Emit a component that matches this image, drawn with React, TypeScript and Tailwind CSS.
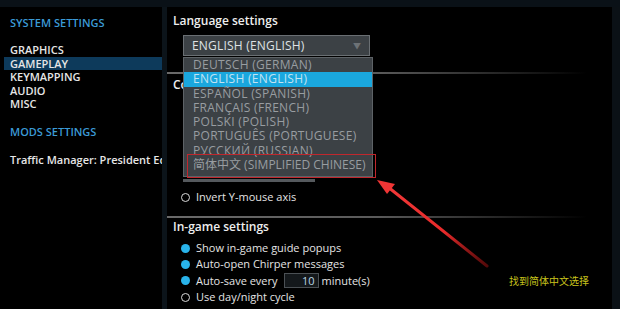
const font = { fontFamily: '"Open Sans", "Noto Sans CJK SC", sans-serif' };

const languages = [
  'DEUTSCH (GERMAN)',
  'ENGLISH (ENGLISH)',
  'ESPAÑOL (SPANISH)',
  'FRANÇAIS (FRENCH)',
  'POLSKI (POLISH)',
  'PORTUGUÊS (PORTUGUESE)',
  'РУССКИЙ (RUSSIAN)',
  '简体中文 (SIMPLIFIED CHINESE)',
];

const Radio = ({ on }: { on: boolean }) =>
  on ? (
    <span className="w-[9px] h-[9px] rounded-full bg-[#29b3ea] shrink-0" />
  ) : (
    <span className="w-[9px] h-[9px] rounded-full border-[1.5px] border-[#d8d8d8] shrink-0" />
  );

const Separator = () => (
  <div className="h-[2px] w-[420px] -ml-[6px] bg-gradient-to-r from-[#6a6a6a] via-[#5a5a5a] to-transparent" />
);

export default function App() {
  return (
    <div
      className="relative w-[620px] h-[309px] bg-black overflow-hidden flex flex-col text-white"
      style={font}
    >
      <div className="h-[7px] bg-[#0a1117] shrink-0" />
      <div className="flex flex-1">
        {/* sidebar */}
        <div className="w-[162px] pt-[9px] flex flex-col text-[11px] font-semibold">
          <div className="pl-[10px] text-[#3b9ad6] leading-[14px]">SYSTEM SETTINGS</div>
          <div className="mt-[13px] flex flex-col leading-[13.6px] text-[#e6e6e6]">
            <div className="pl-[10px]">GRAPHICS</div>
            <div className="ml-[4px] pl-[6px] bg-[#0d3a5b]">GAMEPLAY</div>
            <div className="pl-[10px]">KEYMAPPING</div>
            <div className="pl-[10px]">AUDIO</div>
            <div className="pl-[10px]">MISC</div>
          </div>
          <div className="mt-[14px] pl-[10px] text-[#3b9ad6] leading-[14px]">MODS SETTINGS</div>
          <div className="mt-[14px] pl-[10px] text-[#e6e6e6] whitespace-nowrap overflow-hidden leading-[14px]">
            Traffic Manager: President Edition
          </div>
        </div>
        <div className="w-[5px] bg-[#0c141a]" />

        {/* content */}
        <div className="flex-1 flex flex-col pl-[6px] pt-[7px] text-[11px]">
          <div className="font-semibold text-[12px] text-[#eeeeee] leading-[14px]">Language settings</div>
          <div className="mt-[7px] ml-[10px] w-[187px] h-[21px] bg-[#3c4145] border border-[#6a6f73] flex items-center justify-between px-[8px]">
            <span className="text-[12px] tracking-[0.2px] text-[#dfe2e4]">ENGLISH (ENGLISH)</span>
            <span className="text-[8px] text-[#6d7276]">▼</span>
          </div>
          <div className="mt-[16px]">
            <Separator />
          </div>
          <div className="mt-[4px] font-semibold text-[12px] text-[#eeeeee] leading-[14px]">Controls</div>
          <div className="mt-[87px] ml-[10px] w-[132px] h-[3px] bg-[#55595d]" />
          <div className="mt-[8px] ml-[8px] flex items-center gap-[6px] text-[#e4e4e4] leading-[14px]">
            <Radio on={false} />
            <span>Invert Y-mouse axis</span>
          </div>
          <div className="mt-[12px]">
            <Separator />
          </div>
          <div className="mt-[2px] font-semibold text-[12px] text-[#eeeeee] leading-[14px]">In-game settings</div>
          <div className="mt-[7px] ml-[8px] flex flex-col gap-[2px] text-[#e4e4e4] leading-[14px]">
            <div className="flex items-center gap-[6px]">
              <Radio on />
              <span>Show in-game guide popups</span>
            </div>
            <div className="flex items-center gap-[6px]">
              <Radio on />
              <span>Auto-open Chirper messages</span>
            </div>
            <div className="flex items-center gap-[6px]">
              <Radio on />
              <span>Auto-save every</span>
              <span className="w-[35px] h-[15px] bg-[#14181b] border border-[#4b5054] text-right pr-[3px] leading-[13px] text-[#b9d6e6]">10</span>
              <span className="-ml-[3px]">minute(s)</span>
            </div>
            <div className="flex items-center gap-[6px]">
              <Radio on={false} />
              <span>Use day/night cycle</span>
            </div>
          </div>
        </div>
        <div className="w-[8px] bg-[#0b1116]" />
      </div>

      {/* open dropdown list */}
      <div className="absolute left-[183px] top-[57px] w-[190px] h-[120px] bg-[#3c4145] border border-[#5d6266] flex flex-col">
        {languages.map((l, i) => (
          <div
            key={l}
            className={`h-[14.3px] leading-[14.3px] text-[12px] pl-[9px] whitespace-nowrap ${
              i === 1 ? 'bg-[#1aa7de] text-[#c2e3f2]' : 'text-[#989da1]'
            } ${i === 7 ? 'tracking-[0px]' : 'tracking-[0.3px]'}`}
          >
            {l}
          </div>
        ))}
      </div>
      <div className="absolute left-[187px] top-[154px] w-[189px] h-[24px] border border-[#c0272d]" />

      {/* annotation arrow */}
      <svg className="absolute left-0 top-0" width="620" height="309" viewBox="0 0 620 309">
        <defs>
          <linearGradient id="ar" x1="487" y1="266" x2="380" y2="182" gradientUnits="userSpaceOnUse">
            <stop offset="0" stopColor="#8b1010" stopOpacity="0.6" />
            <stop offset="0.4" stopColor="#e82a2a" />
            <stop offset="1" stopColor="#f23a3a" />
          </linearGradient>
        </defs>
        <path d="M487 266 L388 187" stroke="url(#ar)" strokeWidth="3" strokeLinecap="round" />
        <path d="M377 180 L395 184 L387 194 Z" fill="#f03535" />
      </svg>
      <div className="absolute left-[509px] top-[274px] text-[10px] text-[#c8c41c] leading-[14px]">找到简体中文选择</div>
    </div>
  );
}
